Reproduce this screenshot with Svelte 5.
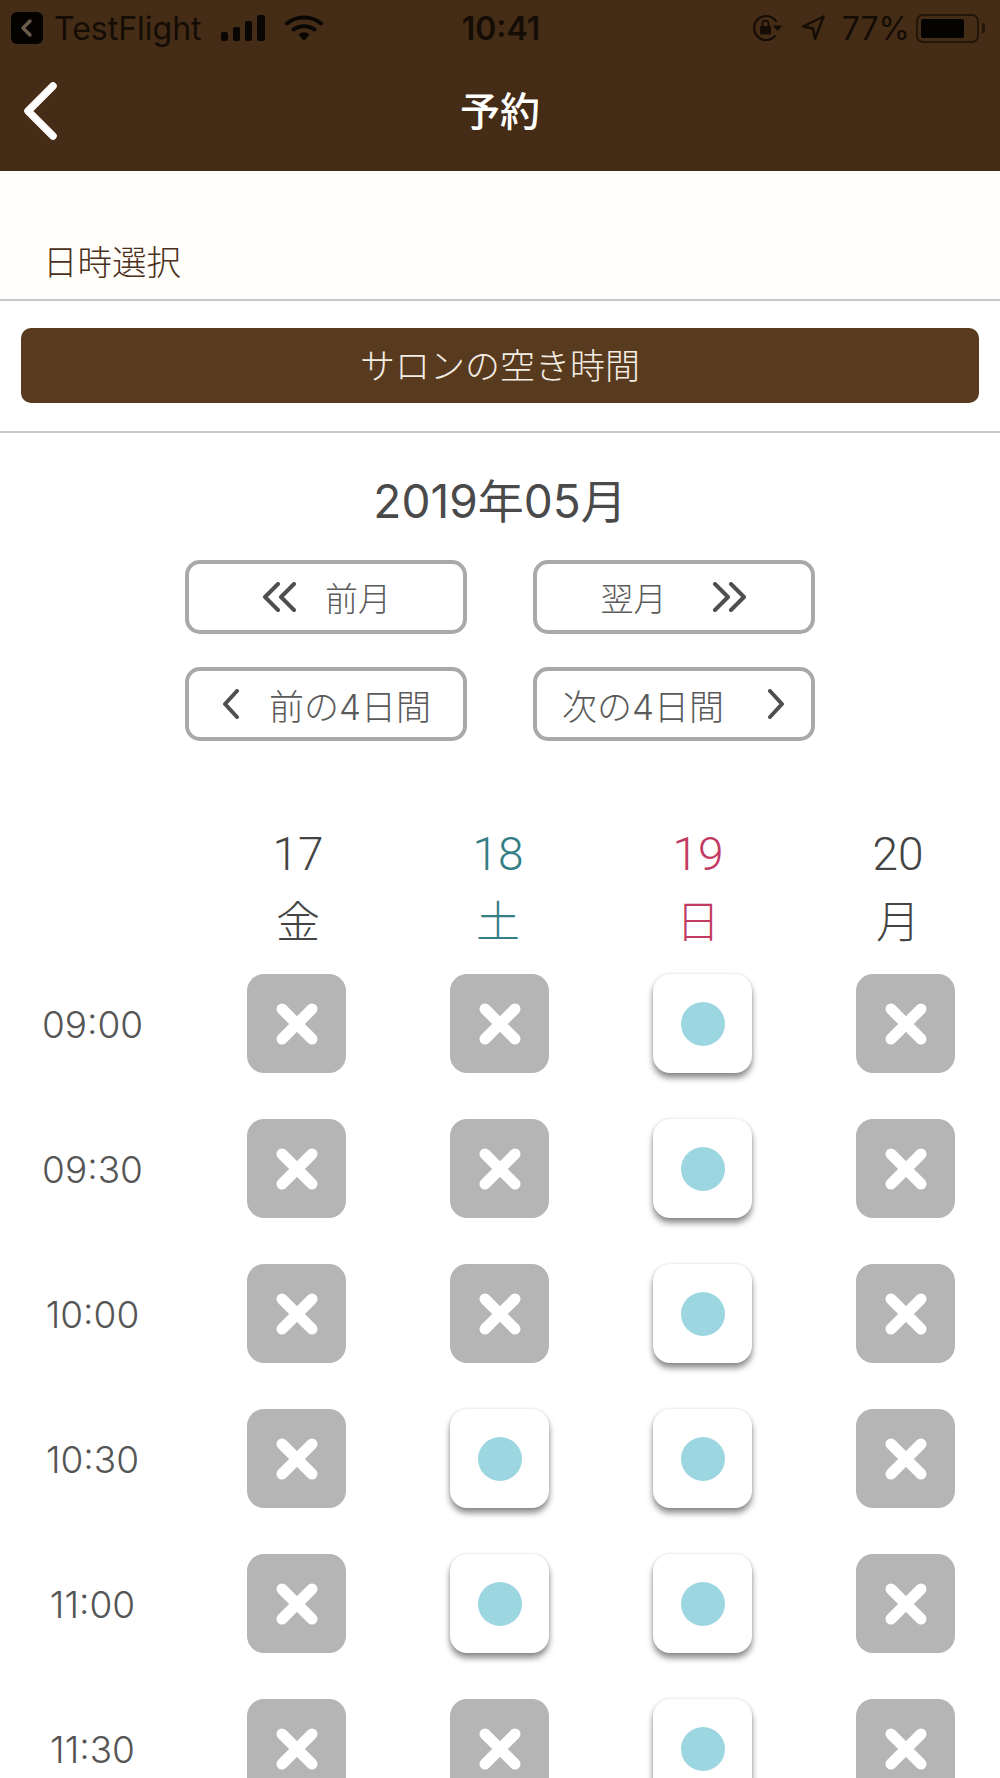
<script>
	const days = [
		{ num: '17', week: '金', tone: '' },
		{ num: '18', week: '土', tone: 'sat' },
		{ num: '19', week: '日', tone: 'sun' },
		{ num: '20', week: '月', tone: '' }
	];

	// true = open slot
	const rows = [
		{ time: '09:00', slots: [false, false, true, false] },
		{ time: '09:30', slots: [false, false, true, false] },
		{ time: '10:00', slots: [false, false, true, false] },
		{ time: '10:30', slots: [false, true, true, false] },
		{ time: '11:00', slots: [false, true, true, false] },
		{ time: '11:30', slots: [false, false, true, false] }
	];
</script>

<div class="page">
	<header class="top">
		<div class="status">
			<div class="status-left">
				<span class="tf-icon">
					<svg viewBox="0 0 32 32" width="32" height="32">
						<rect width="32" height="32" rx="6" fill="#050302" />
						<path d="M19 9 L12 16 L19 23" fill="none" stroke="#6b5a4a" stroke-width="3.4" stroke-linecap="round" stroke-linejoin="round" />
					</svg>
				</span>
				<span class="tf-name">TestFlight</span>
				<svg class="signal" viewBox="0 0 44 26" width="44" height="26">
					<rect x="0" y="17" width="7" height="9" rx="2" fill="#0a0603" />
					<rect x="12" y="12" width="7" height="14" rx="2" fill="#0a0603" />
					<rect x="24" y="6" width="7" height="20" rx="2" fill="#0a0603" />
					<rect x="36" y="0" width="8" height="26" rx="2" fill="#0a0603" />
				</svg>
				<svg class="wifi" viewBox="0 0 38 26" width="38" height="26">
					<path d="M2 8.5 C11 0.5 27 0.5 36 8.5" fill="none" stroke="#0a0603" stroke-width="4" stroke-linecap="round" />
					<path d="M8.5 14.5 C14 10 24 10 29.5 14.5" fill="none" stroke="#0a0603" stroke-width="4" stroke-linecap="round" />
					<path d="M13.5 19.5 C16.5 16.5 21.5 16.5 24.5 19.5 L19 26 Z" fill="#0a0603" />
				</svg>
			</div>
			<div class="clock">10:41</div>
			<div class="status-right">
				<svg viewBox="0 0 32 28" width="32" height="28">
					<path d="M24.5 21.5 A12 12 0 1 1 25.5 8" fill="none" stroke="#140c05" stroke-width="2.2" />
					<path d="M21.5 11.5 L31.5 11.5 L26.5 17 Z" fill="#140c05" />
					<rect x="9" y="12" width="11" height="8.5" rx="1.2" fill="#140c05" />
					<path d="M11.4 12 V9.8 a3.1 3.1 0 0 1 6.2 0 V12" fill="none" stroke="#140c05" stroke-width="1.8" />
				</svg>
				<svg class="loc" viewBox="0 0 24 26" width="24" height="26">
					<path d="M22.5 1.5 L2 11.5 L12 13.5 L14 24 Z" fill="none" stroke="#140c05" stroke-width="2.4" stroke-linejoin="round" />
				</svg>
				<span class="pct">77%</span>
				<span class="battery"><span class="battery-fill"></span></span>
				<span class="battery-nub"></span>
			</div>
		</div>
		<div class="nav">
			<svg class="back" viewBox="0 0 34 58" width="34" height="58">
				<path d="M30 4 L5 29 L30 54" fill="none" stroke="#fff" stroke-width="7.5" stroke-linecap="round" stroke-linejoin="round" />
			</svg>
			<h1>予約</h1>
		</div>
	</header>

	<div class="band">日時選択</div>

	<div class="salon-wrap">
		<div class="salon">サロンの空き時間</div>
	</div>

	<div class="month">2019年05月</div>

	<div class="pager">
		<button class="pg prev-month">
			<svg viewBox="0 0 38 30" width="38" height="30"><path d="M17 2 L4 15 L17 28 M33 2 L20 15 L33 28" /></svg>
			<span>前月</span>
		</button>
		<button class="pg next-month">
			<span>翌月</span>
			<svg viewBox="0 0 38 30" width="38" height="30"><path d="M5 2 L18 15 L5 28 M21 2 L34 15 L21 28" /></svg>
		</button>
		<button class="pg prev-days">
			<svg viewBox="0 0 20 30" width="20" height="30"><path d="M16 2 L4 15 L16 28" /></svg>
			<span>前の4日間</span>
		</button>
		<button class="pg next-days">
			<span>次の4日間</span>
			<svg viewBox="0 0 20 30" width="20" height="30"><path d="M4 2 L16 15 L4 28" /></svg>
		</button>
	</div>

	<div class="days">
		{#each days as d}
			<div class="day {d.tone}">
				<span class="num">{d.num}</span>
				<span class="week">{d.week}</span>
			</div>
		{/each}
	</div>

	<div class="slots">
		{#each rows as row}
			<div class="time">{row.time}</div>
			{#each row.slots as open}
				{#if open}
					<div class="slot open"><span class="dot"></span></div>
				{:else}
					<div class="slot">
						<svg viewBox="0 0 42 42" width="42" height="42">
							<path d="M6 6 L36 36 M36 6 L6 36" fill="none" stroke="#fff" stroke-width="11" stroke-linecap="round" />
						</svg>
					</div>
				{/if}
			{/each}
		{/each}
	</div>
</div>

<style>
	:global(body) {
		background: #fff;
	}

	.page {
		height: 1778px;
		overflow: hidden;
		font-family: Inter, 'Noto Sans CJK JP', sans-serif;
		color: #4a4a4a;
	}

	.top {
		background: #452c16;
	}

	.status {
		height: 56px;
		display: grid;
		grid-template-columns: 1fr auto 1fr;
		align-items: center;
		padding: 0 15px 0 11px;
		color: #140c05;
		font-size: 32px;
		font-weight: 400;
	}

	.status-left,
	.status-right {
		display: flex;
		align-items: center;
	}

	.status-right {
		justify-content: flex-end;
	}

	.tf-icon {
		display: flex;
		margin-right: 11px;
	}

	.tf-name {
		margin-right: 20px;
		width: 147px;
		white-space: nowrap;
	}

	.signal {
		margin-right: 20px;
	}

	.clock {
		font-weight: 600;
		padding-left: 6px;
	}

	.loc {
		margin-left: 18px;
	}

	.pct {
		margin-left: 17px;
		margin-right: 6px;
	}

	.battery {
		width: 63px;
		height: 29px;
		border: 2px solid #22150a;
		border-radius: 7px;
		box-sizing: border-box;
		padding: 3px;
		display: flex;
	}

	.battery-fill {
		width: 43px;
		background: #050302;
		border-radius: 2px;
	}

	.battery-nub {
		width: 3px;
		height: 10px;
		margin-left: 3px;
		background: #22150a;
		border-radius: 0 2px 2px 0;
	}

	.nav {
		height: 115px;
		padding-bottom: 4px;
		box-sizing: border-box;
		position: relative;
		display: flex;
		align-items: center;
		justify-content: center;
	}

	.back {
		position: absolute;
		left: 23px;
		top: 26px;
	}

	h1 {
		margin: 0;
		color: #fff;
		font-size: 40px;
		font-weight: 500;
		line-height: 1;
	}

	.band {
		height: 128px;
		box-sizing: border-box;
		background: #fffefa;
		padding: 0 43px 12px;
		display: flex;
		align-items: flex-end;
		font-size: 34.5px;
		font-weight: 300;
		line-height: 48px;
		color: #4b3020;
	}

	.salon-wrap {
		border-top: 2px solid #c8c8c8;
		border-bottom: 2px solid #c8c8c8;
		padding: 27px 21px 28px;
	}

	.salon {
		height: 75px;
		padding-bottom: 4px;
		box-sizing: border-box;
		display: flex;
		align-items: center;
		justify-content: center;
		background: #583a1e;
		border-radius: 10px;
		color: #f3ede4;
		font-size: 35px;
		font-weight: 300;
	}

	.month {
		margin-top: 38px;
		height: 60px;
		line-height: 60px;
		text-align: center;
		font-size: 46px;
		font-weight: 400;
		color: #4a4a4a;
	}

	.pager {
		margin-top: 29px;
		display: grid;
		grid-template-columns: 282px 282px;
		gap: 33px 66px;
		justify-content: center;
	}

	.pg {
		height: 74px;
		padding: 0;
		display: flex;
		align-items: center;
		justify-content: center;
		background: #fff;
		border: 4px solid #a9a9a9;
		border-radius: 15px;
		color: #5a5a5a;
		font-family: inherit;
		font-size: 33px;
		font-weight: 300;
	}

	.prev-month {
		gap: 26px;
	}

	.next-month {
		gap: 43px;
	}

	.prev-days {
		gap: 28px;
		font-size: 35px;
	}

	.next-days {
		gap: 42px;
		font-size: 35px;
	}

	.pg svg {
		flex: none;
	}

	.pg path {
		fill: none;
		stroke: #4f4f4f;
		stroke-width: 4;
		stroke-linecap: round;
		stroke-linejoin: round;
	}

	.days {
		margin-top: 83px;
		padding-left: 198px;
		display: grid;
		grid-template-columns: repeat(4, 200px);
	}

	.day {
		display: flex;
		flex-direction: column;
		align-items: center;
		gap: 8px;
		color: #444;
	}

	.day.sat {
		color: #347f85;
	}

	.day.sun {
		color: #c23a62;
	}

	.num {
		font-family: Roboto, sans-serif;
		font-size: 46px;
		font-weight: 300;
		line-height: 60px;
	}

	.week {
		font-size: 44px;
		font-weight: 300;
		line-height: 60px;
	}

	.slots {
		margin-top: 22px;
		display: grid;
		grid-template-columns: 143px repeat(4, 99px);
		grid-auto-rows: 99px;
		gap: 46px 104px;
	}

	.time {
		padding: 2px 0 0 42px;
		display: flex;
		align-items: center;
		justify-content: center;
		font-size: 37px;
		font-weight: 300;
		color: #555;
	}

	.slot {
		display: flex;
		align-items: center;
		justify-content: center;
		background: #b5b5b5;
		border-radius: 17px;
	}

	.slot.open {
		background: #fff;
		box-shadow:
			0 5px 6px rgba(0, 0, 0, 0.45),
			0 0 3px rgba(0, 0, 0, 0.12);
	}

	.dot {
		width: 44px;
		height: 44px;
		border-radius: 50%;
		background: #9cd6e0;
	}
</style>
